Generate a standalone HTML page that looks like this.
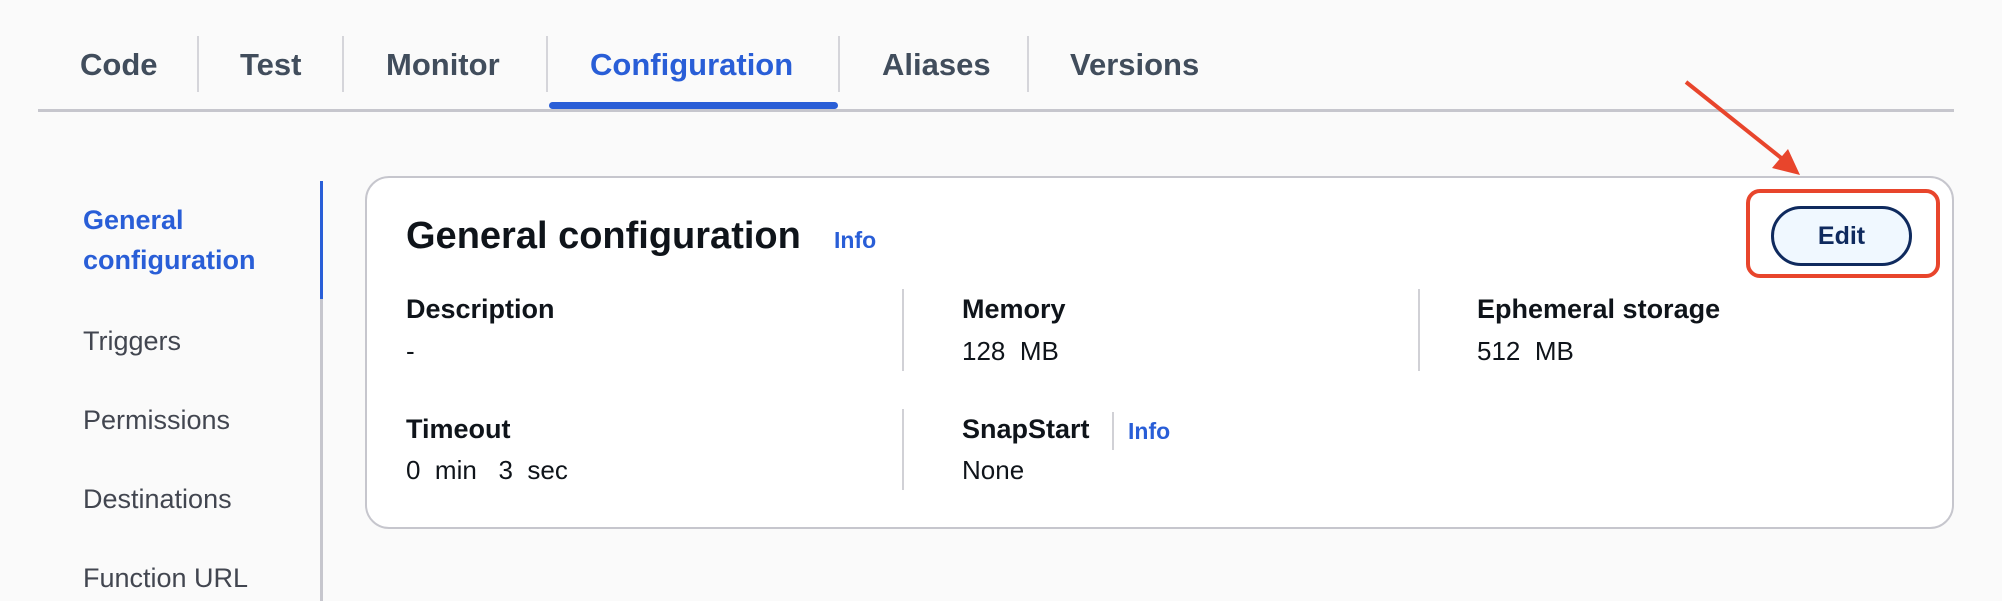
<!DOCTYPE html>
<html><head><meta charset="utf-8"><style>
*{margin:0;padding:0;box-sizing:border-box}
body{width:2002px;height:594px;background:#fafafa;position:relative;overflow:hidden;font-family:"Liberation Sans",sans-serif}
.a{position:absolute;line-height:1;white-space:nowrap}
.tab{font-size:31px;font-weight:700;color:#414d5c;top:49px}
.sep{position:absolute;width:2px;background:#d5d5da;top:36px;height:56px}
.nav{font-size:27px;color:#424650;left:83px}
.lbl{font-size:27px;font-weight:700;color:#0f141a}
.val{font-size:26px;color:#0f141a}
.vd{position:absolute;width:2px;background:#d1d1d6}
.blue{color:#295ed7}
</style></head><body>
<div class="a tab" style="left:80px">Code</div>
<div class="sep" style="left:197px"></div>
<div class="a tab" style="left:240px">Test</div>
<div class="sep" style="left:342px"></div>
<div class="a tab" style="left:386px">Monitor</div>
<div class="sep" style="left:546px"></div>
<div class="a tab blue" style="left:590px">Configuration</div>
<div class="sep" style="left:838px"></div>
<div class="a tab" style="left:882px">Aliases</div>
<div class="sep" style="left:1027px"></div>
<div class="a tab" style="left:1070px">Versions</div>
<div style="position:absolute;left:38px;top:109px;width:1916px;height:3px;background:#c6c6cd"></div>
<div style="position:absolute;left:549px;top:102px;width:289px;height:7px;border-radius:4px;background:#295ed7"></div>

<div class="a nav blue" style="top:200px;line-height:40px;white-space:normal;width:200px;font-weight:700">General configuration</div>
<div class="a nav" style="top:328px">Triggers</div>
<div class="a nav" style="top:407px">Permissions</div>
<div class="a nav" style="top:486px">Destinations</div>
<div class="a nav" style="top:565px">Function URL</div>
<div style="position:absolute;left:320px;top:181px;width:3px;height:420px;background:#c6c6cd"></div>
<div style="position:absolute;left:320px;top:181px;width:3px;height:118px;background:#295ed7"></div>

<div style="position:absolute;left:365px;top:176px;width:1589px;height:353px;background:#fff;border:2px solid #c6c6cd;border-radius:24px"></div>
<div class="a" style="left:406px;top:217px;font-size:38px;font-weight:700;color:#0f141a">General configuration</div>
<div class="a blue" style="left:834px;top:229px;font-size:23px;font-weight:700">Info</div>

<div class="a lbl" style="left:406px;top:296px">Description</div>
<div class="a val" style="left:406px;top:338px">-</div>
<div class="vd" style="left:902px;top:289px;height:82px"></div>
<div class="a lbl" style="left:962px;top:296px">Memory</div>
<div class="a val" style="left:962px;top:338px">128&nbsp; MB</div>
<div class="vd" style="left:1418px;top:289px;height:82px"></div>
<div class="a lbl" style="left:1477px;top:296px">Ephemeral storage</div>
<div class="a val" style="left:1477px;top:338px">512&nbsp; MB</div>

<div class="a lbl" style="left:406px;top:416px">Timeout</div>
<div class="a val" style="left:406px;top:457px">0&nbsp; min&nbsp;&nbsp; 3&nbsp; sec</div>
<div class="vd" style="left:902px;top:409px;height:81px"></div>
<div class="a lbl" style="left:962px;top:416px">SnapStart</div>
<div class="vd" style="left:1112px;top:412px;height:38px"></div>
<div class="a blue" style="left:1128px;top:420px;font-size:23px;font-weight:700">Info</div>
<div class="a val" style="left:962px;top:457px">None</div>

<div style="position:absolute;left:1746px;top:189px;width:194px;height:89px;border:4px solid #e8452c;border-radius:14px"></div>
<div style="position:absolute;left:1771px;top:206px;width:141px;height:60px;border:3px solid #0f2a5e;border-radius:30px;background:#f0f8ff;color:#0f2a5e;font-size:25px;font-weight:700;text-align:center;line-height:54px">Edit</div>
<svg style="position:absolute;left:0;top:0" width="2002" height="594">
<line x1="1686" y1="82" x2="1785" y2="161" stroke="#e8452c" stroke-width="4"/>
<polygon points="1800,175 1772,168 1788,149" fill="#e8452c"/>
</svg>
</body></html>
